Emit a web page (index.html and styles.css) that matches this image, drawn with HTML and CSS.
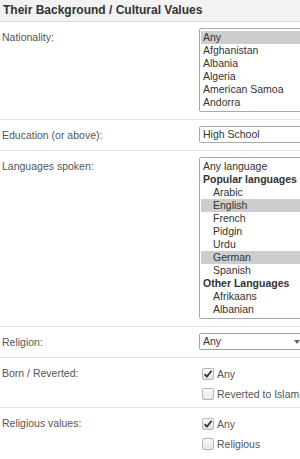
FILE: index.html
```html
<!DOCTYPE html>
<html>
<head>
<meta charset="utf-8">
<link rel="stylesheet" href="styles.css">
</head>
<body>
<div class="panel">
  <div class="head">Their Background / Cultural Values</div>

  <div class="row">
    <div class="label">Nationality:</div>
    <div class="field">
      <div class="listbox">
        <div class="opt sel">Any</div>
        <div class="opt">Afghanistan</div>
        <div class="opt">Albania</div>
        <div class="opt">Algeria</div>
        <div class="opt">American Samoa</div>
        <div class="opt">Andorra</div>
      </div>
    </div>
  </div>

  <div class="row">
    <div class="label">Education (or above):</div>
    <div class="field">
      <div class="select">High School</div>
    </div>
  </div>

  <div class="row">
    <div class="label">Languages spoken:</div>
    <div class="field">
      <div class="listbox">
        <div class="opt">Any language</div>
        <div class="opt grp">Popular languages</div>
        <div class="opt sub">Arabic</div>
        <div class="opt sub sel">English</div>
        <div class="opt sub">French</div>
        <div class="opt sub">Pidgin</div>
        <div class="opt sub">Urdu</div>
        <div class="opt sub sel">German</div>
        <div class="opt sub">Spanish</div>
        <div class="opt grp">Other Languages</div>
        <div class="opt sub">Afrikaans</div>
        <div class="opt sub">Albanian</div>
      </div>
    </div>
  </div>

  <div class="row">
    <div class="label">Religion:</div>
    <div class="field">
      <div class="select focus">Any<span class="arrow"></span></div>
    </div>
  </div>

  <div class="row">
    <div class="label">Born / Reverted:</div>
    <div class="field checks">
      <div class="check"><span class="box on"><svg viewBox="0 0 12 12" width="12" height="12"><path d="M2.6 6.2 L4.9 8.6 L9.6 2.8" fill="none" stroke="#333" stroke-width="1.8"/></svg></span>Any</div>
      <div class="check"><span class="box"></span>Reverted to Islam</div>
    </div>
  </div>

  <div class="row last">
    <div class="label">Religious values:</div>
    <div class="field checks">
      <div class="check"><span class="box on"><svg viewBox="0 0 12 12" width="12" height="12"><path d="M2.6 6.2 L4.9 8.6 L9.6 2.8" fill="none" stroke="#333" stroke-width="1.8"/></svg></span>Any</div>
      <div class="check"><span class="box"></span>Religious</div>
    </div>
  </div>
</div>
</body>
</html>
```

FILE: styles.css
```css
html, body {
  margin: 0;
  padding: 0;
  overflow: hidden;
  background: #fff;
}
body {
  font-family: "Liberation Sans", Arial, sans-serif;
  font-size: 10.5px;
  color: #555;
}
.panel {
  width: 310px;
}
.head {
  height: 22px;
  box-sizing: border-box;
  padding: 3px 0 0 3px;
  background: #f2f2f2;
  border-bottom: 1px solid #dcdcdc;
  font-weight: bold;
  font-size: 12px;
  line-height: 15px;
  color: #333;
}
.row {
  display: flex;
  padding: 6px 0 7px 0;
  border-bottom: 1px solid #e3e3e3;
}
.row.last {
  border-bottom: none;
}
.label {
  width: 199px;
  flex: none;
  padding: 3px 0 0 2px;
  box-sizing: border-box;
  line-height: 13px;
}
.field {
  flex: none;
  width: 108px;
}
.listbox {
  border: 1px solid #a9a9a9;
  border-radius: 2px;
  padding: 2px 1px;
  line-height: 13px;
  color: #333;
}
.opt {
  padding-left: 2px;
  white-space: nowrap;
}
.opt.sel {
  background: #cdcdcd;
}
.opt.grp {
  font-weight: bold;
}
.opt.sub {
  padding-left: 12px;
}
.select {
  position: relative;
  width: 104px;
  height: 17px;
  box-sizing: border-box;
  border: 1px solid #a9a9a9;
  border-radius: 2px;
  padding: 1px 0 0 3px;
  line-height: 13px;
  color: #333;
}
.select.focus {
  border-color: #8aa6d6;
}
.arrow {
  position: absolute;
  right: 2px;
  top: 6px;
  border-left: 3px solid transparent;
  border-right: 3px solid transparent;
  border-top: 4px solid #666;
}
.checks {
  display: flex;
  flex-direction: column;
  gap: 8px;
  padding-top: 4px;
}
.check {
  display: flex;
  align-items: center;
  gap: 3px;
  padding-left: 3px;
  line-height: 12px;
  height: 12px;
  color: #555;
}
.box {
  width: 12px;
  height: 12px;
  box-sizing: border-box;
  border: 1px solid #b5b5b5;
  border-radius: 2px;
  background: linear-gradient(#fafafa, #e6e6e6);
  flex: none;
  position: relative;
}
.box svg {
  position: absolute;
  left: -1px;
  top: -1px;
}
```
